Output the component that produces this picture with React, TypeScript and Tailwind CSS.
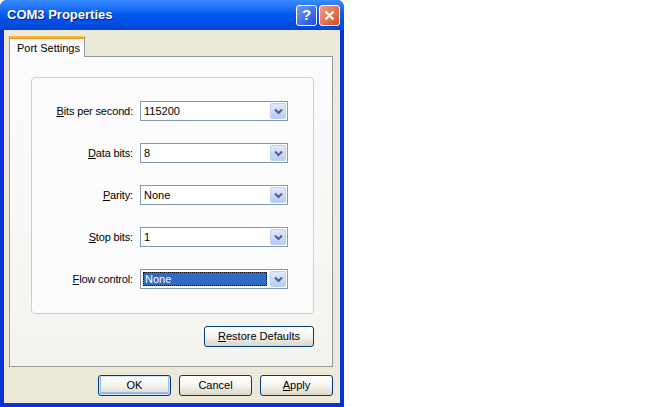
import React from "react";

const font = { fontFamily: '"Liberation Sans", Arial, sans-serif' };

const Chevron = () => (
  <svg width="9" height="7" viewBox="0 0 9 7">
    <path d="M1 1.5 L4.5 5 L8 1.5" fill="none" stroke="#4D6185" strokeWidth="2" />
  </svg>
);

interface ComboProps {
  value: string;
  selected?: boolean;
}

const Combo = ({ value, selected }: ComboProps) => (
  <div className="flex h-[20px] w-[148px] border border-[#7F9DB9] bg-white">
    <div className="flex flex-1 items-center pl-[2px] pr-[2px]">
      {selected ? (
        <div className="flex h-[14px] w-full items-center border border-dotted border-[#0b0b0b] bg-[#316AC5] pl-[1px] text-white">
          {value}
        </div>
      ) : (
        <span className="pl-[1px] text-black">{value}</span>
      )}
    </div>
    <div className="m-[1px] flex w-[16px] items-center justify-center rounded-[2px] border border-[#BFD0F5] bg-gradient-to-b from-[#E1EAFE] to-[#B9CCF7]">
      <Chevron />
    </div>
  </div>
);

const Row = ({
  ul,
  rest,
  value,
  selected,
}: {
  ul: string;
  rest: string;
  value: string;
  selected?: boolean;
}) => (
  <div className="flex h-[20px] items-center">
    <div className="w-[102px] pr-[1px] text-right tracking-[-0.15px]">
      <span className="underline underline-offset-1">{ul}</span>
      {rest}
    </div>
    <div className="ml-[6px]">
      <Combo value={value} selected={selected} />
    </div>
  </div>
);

const XPButton = ({
  children,
  width,
  def,
}: {
  children: React.ReactNode;
  width: string;
  def?: boolean;
}) => (
  <div
    className={`flex h-[21px] ${width} items-center justify-center rounded-[3px] border border-[#003C74] bg-gradient-to-b from-[#FFFFFF] via-[#F5F4EE] to-[#D9D5C9] text-black ${
      def ? "shadow-[inset_0_0_0_1px_#CEE7FF,inset_0_-1px_0_2px_#98B8EA]" : ""
    }`}
  >
    {children}
  </div>
);

export default function App() {
  return (
    <div className="flex h-[407px] w-[670px] bg-white text-[11px] text-black" style={font}>
      <div className="flex h-[407px] w-[344px] flex-col rounded-t-[7px] bg-[#0831D9]">
        <div className="flex h-[30px] items-center rounded-t-[7px] bg-gradient-to-b from-[#3A8CFF] via-[#0058EE] to-[#0046D8] pl-[7px] pr-[4px]">
          <span className="flex-1 text-[13px] font-bold text-white [text-shadow:1px_1px_0_#0A1E80]">
            COM3 Properties
          </span>
          <div className="flex h-[21px] w-[21px] items-center justify-center rounded-[3px] border border-white bg-gradient-to-br from-[#6F9BF6] to-[#1C4ED6] text-[15px] font-bold text-white">
            ?
          </div>
          <div className="ml-[2px] flex h-[21px] w-[21px] items-center justify-center rounded-[3px] border border-white bg-gradient-to-br from-[#F0A080] to-[#D24A20]">
            <svg width="11" height="11" viewBox="0 0 11 11">
              <path d="M1.5 1.5 L9.5 9.5 M9.5 1.5 L1.5 9.5" stroke="white" strokeWidth="2.2" />
            </svg>
          </div>
        </div>
        <div className="mb-[4px] ml-[4px] mr-[4px] flex flex-1 flex-col bg-[#ECE9D8] pl-[5px] pr-[7px] pt-[6px]">
          <div className="flex">
            <div className="relative z-10 -mb-[1px] flex h-[21px] w-[76px] flex-col border-x border-[#919B9C] bg-[#FCFCFE]">
              <div className="h-[3px] rounded-t-[2px] bg-gradient-to-b from-[#FFC83C] to-[#E68B2C]" />
              <div className="pl-[7px] pt-[1px]">Port Settings</div>
            </div>
          </div>
          <div className="flex h-[311px] flex-col border border-[#919B9C] bg-gradient-to-b from-[#FCFCFE] to-[#F4F3EE] pl-[21px] pr-[18px] pt-[20px]">
            <div className="flex h-[237px] flex-col gap-[22px] rounded-[4px] border border-[#D0D0BF] bg-[#FCFCFC] pt-[23px]">
              <Row ul="B" rest="its per second:" value="115200" />
              <Row ul="D" rest="ata bits:" value="8" />
              <Row ul="P" rest="arity:" value="None" />
              <Row ul="S" rest="top bits:" value="1" />
              <Row ul="F" rest="low control:" value="None" selected />
            </div>
            <div className="mt-[12px] flex justify-end">
              <XPButton width="w-[110px]">
                <span>
                  <span className="underline underline-offset-1">R</span>estore Defaults
                </span>
              </XPButton>
            </div>
          </div>
          <div className="mt-[8px] flex justify-end gap-[8px]">
            <XPButton width="w-[73px]" def>
              OK
            </XPButton>
            <XPButton width="w-[73px]">Cancel</XPButton>
            <XPButton width="w-[73px]">
              <span>
                <span className="underline underline-offset-1">A</span>pply
              </span>
            </XPButton>
          </div>
        </div>
      </div>
    </div>
  );
}
